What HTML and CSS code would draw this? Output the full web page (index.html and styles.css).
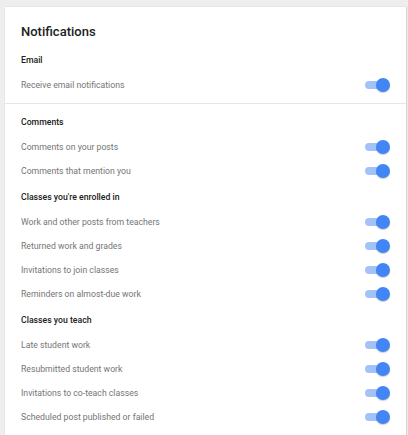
FILE: index.html
```html
<!DOCTYPE html>
<html>
<head>
<meta charset="utf-8">
<link rel="stylesheet" href="styles.css">
</head>
<body>
<div class="card">
  <h1 class="title">Notifications</h1>
  <section class="section first">
    <div class="sec-head">Email</div>
    <div class="row"><span class="label">Receive email notifications</span><span class="toggle"><span class="track"></span><span class="thumb"></span></span></div>
  </section>
  <div class="divider"></div>
  <section class="section after-divider">
    <div class="sec-head">Comments</div>
    <div class="row"><span class="label">Comments on your posts</span><span class="toggle"><span class="track"></span><span class="thumb"></span></span></div>
    <div class="row"><span class="label">Comments that mention you</span><span class="toggle"><span class="track"></span><span class="thumb"></span></span></div>
  </section>
  <section class="section">
    <div class="sec-head">Classes you're enrolled in</div>
    <div class="row"><span class="label">Work and other posts from teachers</span><span class="toggle"><span class="track"></span><span class="thumb"></span></span></div>
    <div class="row"><span class="label">Returned work and grades</span><span class="toggle"><span class="track"></span><span class="thumb"></span></span></div>
    <div class="row"><span class="label">Invitations to join classes</span><span class="toggle"><span class="track"></span><span class="thumb"></span></span></div>
    <div class="row"><span class="label">Reminders on almost-due work</span><span class="toggle"><span class="track"></span><span class="thumb"></span></span></div>
  </section>
  <section class="section">
    <div class="sec-head">Classes you teach</div>
    <div class="row"><span class="label">Late student work</span><span class="toggle"><span class="track"></span><span class="thumb"></span></span></div>
    <div class="row"><span class="label">Resubmitted student work</span><span class="toggle"><span class="track"></span><span class="thumb"></span></span></div>
    <div class="row"><span class="label">Invitations to co-teach classes</span><span class="toggle"><span class="track"></span><span class="thumb"></span></span></div>
    <div class="row"><span class="label">Scheduled post published or failed</span><span class="toggle"><span class="track"></span><span class="thumb"></span></span></div>
  </section>
</div>
</body>
</html>
```
FILE: styles.css
```css
html, body {
  margin: 0;
  padding: 0;
  background: #eeeeee;
  font-family: Roboto, "Liberation Sans", sans-serif;
}
body {
  padding: 7px 2px 0 5px;
  height: 435px;
  box-sizing: border-box;
  overflow: hidden;
}
.card {
  background: #ffffff;
  min-height: 440px;
  box-shadow: 0 0 1px rgba(0,0,0,0.12), 1px 0 1px rgba(0,0,0,0.08);
}
.title {
  margin: 0;
  padding: 16px 16px 6px;
  font-size: 13px;
  line-height: 18px;
  font-weight: 500;
  color: #212121;
}
.section {
  padding: 0 16px 1px;
}
.section.first {
  padding-bottom: 6px;
}
.section.after-divider {
  padding-top: 5px;
}
.divider {
  height: 1px;
  background: #e6e6e6;
}
.sec-head {
  height: 26px;
  display: flex;
  align-items: center;
  font-size: 8.7px;
  font-weight: 500;
  color: #212121;
}
.row {
  height: 24px;
  display: flex;
  align-items: center;
  justify-content: space-between;
}
.label {
  font-size: 8.7px;
  color: #757575;
}
.toggle {
  position: relative;
  width: 25px;
  height: 14px;
  flex: none;
}
.track {
  position: absolute;
  left: 0;
  top: 3px;
  width: 22px;
  height: 8px;
  border-radius: 4px;
  background: #a3c3f8;
}
.thumb {
  position: absolute;
  right: 0;
  top: 0;
  width: 14px;
  height: 14px;
  border-radius: 50%;
  background: #4285f4;
  box-shadow: 0 1px 1px rgba(0,0,0,0.2);
}
```
